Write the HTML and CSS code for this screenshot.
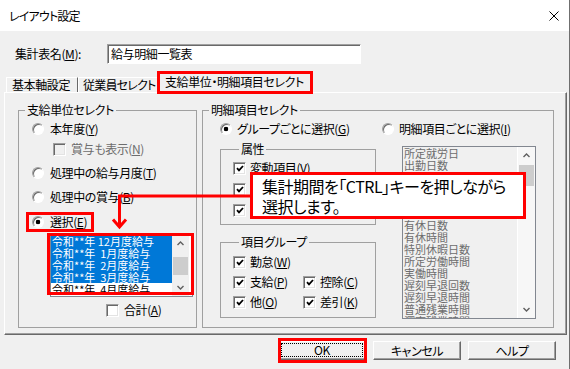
FILE: index.html
```html
<!DOCTYPE html>
<html lang="ja">
<head>
    <meta charset="UTF-8">
    <title>レイアウト設定</title>
    <link rel="stylesheet" href="styles.css">
</head>
<body>
<div class="window">
    <div class="titlebar">
        <span class="title">レイアウト設定</span>
        <svg class="close" width="10" height="10" viewBox="0 0 10 10"><path d="M0.5 0.5L9.5 9.5M9.5 0.5L0.5 9.5" stroke="#000" stroke-width="1" fill="none"/></svg>
    </div>

    <div class="name-row">
        <span class="name-label">集計表名(<u>M</u>):</span>
        <div class="textbox">給与明細一覧表</div>
    </div>

    <div class="tabs">
        <div class="tab tab-base">基本軸設定</div>
        <div class="tab tab-staff">従業員セレクト</div>
        <div class="tab tab-unit active">支給単位・明細項目セレクト</div>
    </div>

    <div class="panel">
        <!-- 支給単位 -->
        <fieldset class="group unit-group">
            <legend>支給単位セレクト</legend>
            <div class="unit-body">
                <div class="opt first"><span class="radio"></span><span>本年度(<u>Y</u>)</span></div>
                <div class="opt sub disabled"><span class="check off"></span><span>賞与も表示(<u>N</u>)</span></div>
                <div class="opt"><span class="radio"></span><span>処理中の給与月度(<u>T</u>)</span></div>
                <div class="opt"><span class="radio"></span><span>処理中の賞与(<u>B</u>)</span></div>
                <div class="opt pick"><span class="mark"><span class="radio on"></span><span>選択(<u>E</u>)</span></span></div>
                <div class="list month-list">
                    <div class="list-items">
                        <div class="list-item sel">令和**年 12月度給与</div>
                        <div class="list-item sel">令和**年  1月度給与</div>
                        <div class="list-item sel">令和**年  2月度給与</div>
                        <div class="list-item sel">令和**年  3月度給与</div>
                        <div class="list-item">令和**年  4月度給与</div>
                    </div>
                    <div class="scrollbar">
                        <div class="sb-btn"><svg width="7" height="5" viewBox="0 0 7 5"><path d="M0.5 4L3.5 1L6.5 4" stroke="#606060" stroke-width="1.4" fill="none"/></svg></div>
                        <div class="sb-track"><div class="sb-thumb"></div></div>
                        <div class="sb-btn"><svg width="7" height="5" viewBox="0 0 7 5"><path d="M0.5 1L3.5 4L6.5 1" stroke="#606060" stroke-width="1.4" fill="none"/></svg></div>
                    </div>
                </div>
                <div class="opt total"><span class="check off"></span><span>合計(<u>A</u>)</span></div>
            </div>
        </fieldset>

        <!-- 明細項目 -->
        <fieldset class="group item-group">
            <legend>明細項目セレクト</legend>
            <div class="item-body">
                <div class="mode-row">
                    <div class="opt mode"><span class="radio on"></span><span>グループごとに選択(<u>G</u>)</span></div>
                    <div class="opt"><span class="radio"></span><span>明細項目ごとに選択(<u>I</u>)</span></div>
                </div>
                <div class="item-cols">
                    <div class="sub-groups">
                        <fieldset class="group attr-group">
                            <legend>属性</legend>
                            <div class="opt first"><span class="check"><svg width="8" height="7" viewBox="0 0 8 7"><path d="M1 3.2L3 5.4L7 1" stroke="#000" stroke-width="1.8" fill="none"/></svg></span><span>変動項目(<u>V</u>)</span></div>
                            <div class="opt"><span class="check"><svg width="8" height="7" viewBox="0 0 8 7"><path d="M1 3.2L3 5.4L7 1" stroke="#000" stroke-width="1.8" fill="none"/></svg></span><span>固定項目(<u>F</u>)</span></div>
                            <div class="opt"><span class="check"><svg width="8" height="7" viewBox="0 0 8 7"><path d="M1 3.2L3 5.4L7 1" stroke="#000" stroke-width="1.8" fill="none"/></svg></span><span>計算項目(<u>R</u>)</span></div>
                        </fieldset>
                        <fieldset class="group kind-group">
                            <legend>項目グループ</legend>
                            <div class="kind-grid">
                                <div class="opt"><span class="check"><svg width="8" height="7" viewBox="0 0 8 7"><path d="M1 3.2L3 5.4L7 1" stroke="#000" stroke-width="1.8" fill="none"/></svg></span><span>勤怠(<u>W</u>)</span></div>
                                <div></div>
                                <div class="opt"><span class="check"><svg width="8" height="7" viewBox="0 0 8 7"><path d="M1 3.2L3 5.4L7 1" stroke="#000" stroke-width="1.8" fill="none"/></svg></span><span>支給(<u>P</u>)</span></div>
                                <div class="opt"><span class="check"><svg width="8" height="7" viewBox="0 0 8 7"><path d="M1 3.2L3 5.4L7 1" stroke="#000" stroke-width="1.8" fill="none"/></svg></span><span>控除(<u>C</u>)</span></div>
                                <div class="opt"><span class="check"><svg width="8" height="7" viewBox="0 0 8 7"><path d="M1 3.2L3 5.4L7 1" stroke="#000" stroke-width="1.8" fill="none"/></svg></span><span>他(<u>O</u>)</span></div>
                                <div class="opt"><span class="check"><svg width="8" height="7" viewBox="0 0 8 7"><path d="M1 3.2L3 5.4L7 1" stroke="#000" stroke-width="1.8" fill="none"/></svg></span><span>差引(<u>K</u>)</span></div>
                            </div>
                        </fieldset>
                    </div>
                    <div class="list detail-list">
                        <div class="list-items">
                            <div class="list-item">所定就労日</div>
                            <div class="list-item">出勤日数</div>
                            <div class="list-item">欠勤日数</div>
                            <div class="list-item">出勤時間</div>
                            <div class="list-item">休日出勤日数</div>
                            <div class="list-item">代休日数</div>
                            <div class="list-item">有休日数</div>
                            <div class="list-item">有休時間</div>
                            <div class="list-item">特別休暇日数</div>
                            <div class="list-item">所定労働時間</div>
                            <div class="list-item">実働時間</div>
                            <div class="list-item">遅刻早退回数</div>
                            <div class="list-item">遅刻早退時間</div>
                            <div class="list-item">普通残業時間</div>
                            <div class="list-item">深夜残業時間</div>
                        </div>
                        <div class="scrollbar">
                            <div class="sb-btn"><svg width="7" height="5" viewBox="0 0 7 5"><path d="M0.5 4L3.5 1L6.5 4" stroke="#606060" stroke-width="1.4" fill="none"/></svg></div>
                            <div class="sb-track"><div class="sb-thumb"></div></div>
                            <div class="sb-btn"><svg width="7" height="5" viewBox="0 0 7 5"><path d="M0.5 1L3.5 4L6.5 1" stroke="#606060" stroke-width="1.4" fill="none"/></svg></div>
                        </div>
                    </div>
                </div>
            </div>
        </fieldset>
    </div>

    <div class="buttons">
        <div class="btn default"><span class="focus">OK</span></div>
        <div class="btn">キャンセル</div>
        <div class="btn">ヘルプ</div>
    </div>

    <!-- annotation -->
    <svg class="connector" width="142" height="44" viewBox="110 190 142 44">
        <polyline points="251,196 119.5,196 119.5,227" stroke="#f00" stroke-width="3" fill="none"/>
        <polyline points="113,219.5 119.5,227 126,219.5" stroke="#f00" stroke-width="3" fill="none"/>
    </svg>
    <div class="callout">集計期間を「CTRL」キーを押しながら<br>選択します。</div>
</div>
</body>
</html>
```

FILE: styles.css
```css
* {
    box-sizing: border-box;
}
html, body {
    margin: 0;
    padding: 0;
}
body {
    font-family: "Noto Sans CJK JP", "Noto Sans", sans-serif;
    font-size: 12px;
    line-height: 16px;
    color: #000;
    background: #f0f0f0;
    font-feature-settings: "palt";
    letter-spacing: -0.4px;
}
u {
    text-underline-offset: 1px;
}
.window {
    position: relative;
    width: 570px;
    height: 369px;
    background: #f0f0f0;
    border-right: 1px solid #6f6f6f;
    overflow: hidden;
}
/* title bar */
.titlebar {
    height: 31px;
    background: #fff;
    display: flex;
    align-items: center;
    justify-content: space-between;
    padding: 0 10px 0 9px;
}
.title {
    letter-spacing: -0.8px;
}
/* name */
.name-row {
    display: flex;
    align-items: center;
    height: 20px;
    margin-top: 13px;
    padding-left: 15px;
}
.name-label {
    width: 92px;
}
.textbox {
    width: 254px;
    height: 20px;
    background: #fff;
    border: 1px solid;
    border-color: #a0a0a0 #fff #fff #a0a0a0;
    box-shadow: inset 1px 1px 0 #696969;
    padding: 1px 3px;
}
/* tabs */
.tabs {
    display: flex;
    align-items: flex-end;
    height: 20px;
    margin-top: 8px;
    padding-left: 6px;
}
.tab {
    height: 15px;
    line-height: 14px;
    padding: 0 0 0 5px;
    border: 1px solid;
    border-bottom: none;
    border-color: #fff #696969 transparent #fff;
    white-space: nowrap;
    overflow: hidden;
}
.tab-base {
    width: 72px;
}
.tab-staff {
    width: 82px;
    padding-left: 4px;
    letter-spacing: -0.8px;
}
.tab-unit {
    width: 154px;
}
.tab.active {
    position: relative;
    z-index: 1;
    overflow: visible;
    height: 21px;
    line-height: 16px;
    padding: 1px 0 0 6px;
    margin: 0 0 -1px -2px;
    background: #f0f0f0;
    outline: 3px solid #f00;
    outline-offset: -2px;
}
/* panel */
.panel {
    display: flex;
    gap: 5px;
    width: 563px;
    height: 243px;
    margin-left: 4px;
    padding: 9px 0 6px 13px;
    border: 1px solid;
    border-color: #fff #696969 #696969 #fff;
    box-shadow: inset -1px -1px 0 #a0a0a0;
}
fieldset.group {
    margin: 0;
    padding: 0;
    min-width: 0;
    border: 1px solid #a0a0a0;
}
fieldset.group legend {
    margin-left: 6px;
    padding: 0 2px;
    line-height: 16px;
}
.unit-group {
    width: 179px;
}
.item-group {
    width: 352px;
}
/* options */
.opt {
    display: flex;
    align-items: center;
    gap: 6px;
    height: 16px;
    white-space: nowrap;
}
.radio {
    flex: none;
    width: 12px;
    height: 12px;
    border-radius: 50%;
    border: 1px solid;
    border-color: #a0a0a0 #fff #fff #a0a0a0;
    background: #fff;
    box-shadow: inset 1px 1px 0 #696969;
}
.radio.on {
    background: radial-gradient(circle at center, #000 0 2px, #fff 2.6px);
}
.check {
    flex: none;
    display: flex;
    align-items: center;
    justify-content: center;
    width: 13px;
    height: 13px;
    border: 1px solid;
    border-color: #a0a0a0 #fff #fff #a0a0a0;
    background: #fff;
    box-shadow: inset 1px 1px 0 #696969, inset -1px -1px 0 #e3e3e3;
}
.disabled {
    color: #6d6d6d;
}
.disabled .check {
    background: #f0f0f0;
}
/* unit group body */
.unit-body {
    padding: 0 0 0 13px;
}
.unit-body .opt {
    margin-top: 8px;
}
.unit-body .opt.first {
    margin-top: 3px;
}
.unit-body .opt.sub {
    margin-top: 4px;
    margin-left: 21px;
    gap: 5px;
}
.unit-body .opt.pick {
    margin-top: 9px;
}
.mark {
    display: flex;
    align-items: center;
    gap: 6px;
    height: 14px;
    margin-left: -3px;
    padding: 0 4px 0 3px;
    outline: 3px solid #f00;
}
.unit-body .opt.total {
    margin-top: 5px;
    margin-left: 74px;
    gap: 5px;
}
/* list boxes */
.list {
    display: flex;
    border: 1px solid #828790;
    background: #fff;
}
.list-items {
    flex: 1;
    min-width: 0;
    overflow: hidden;
}
.list-item {
    height: 12px;
    font-size: 11px;
    line-height: 12px;
    padding-left: 1px;
    white-space: pre;
    letter-spacing: 0;
}
.list-item.sel {
    background: #0078d7;
    color: #fff;
}
.scrollbar {
    flex: none;
    display: flex;
    flex-direction: column;
    width: 17px;
    background: #f0f0f0;
}
.sb-btn {
    height: 17px;
    display: flex;
    align-items: center;
    justify-content: center;
}
.sb-track {
    flex: 1;
    padding: 0 1px;
}
.sb-thumb {
    background: #cdcdcd;
}
.month-list {
    position: relative;
    width: 143px;
    height: 63px;
    margin: 4px 0 0 18px;
}
.month-list .scrollbar {
    margin-right: 3px;
}
.month-list .sb-thumb {
    height: 18px;
    margin-top: 5px;
}
.month-list::after {
    content: "";
    position: absolute;
    left: -4px;
    top: -2px;
    right: -2px;
    bottom: 1px;
    border: 3px solid #f00;
}
.detail-list {
    width: 134px;
    height: 173px;
    margin: 5px 0 0 26px;
    background: #f0f0f0;
    color: #6d6d6d;
}
.detail-list .scrollbar {
    width: 18px;
    border-left: 1px solid #fff;
    background: #f7f7f7;
}
.detail-list .sb-thumb {
    height: 21px;
    margin-top: 1px;
}
/* item group body */
.item-body {
    padding: 0 0 0 17px;
}
.mode-row {
    display: flex;
    margin-top: 3px;
}
.mode-row .opt {
    gap: 5px;
}
.opt.mode {
    width: 162px;
}
.item-cols {
    display: flex;
    margin-top: 4px;
}
.sub-groups {
    width: 156px;
}
.attr-group {
    padding: 0 0 6px 12px !important;
}
.attr-group .opt,
.kind-group .opt {
    gap: 4px;
}
.attr-group .opt {
    margin-top: 5px;
}
.attr-group .opt.first {
    margin-top: 3px;
}
.kind-group {
    margin-top: 9px !important;
    padding: 4px 0 7px 12px !important;
}
.kind-grid {
    display: grid;
    grid-template-columns: 70px 70px;
    row-gap: 4px;
}
/* buttons */
.buttons {
    display: flex;
    justify-content: flex-end;
    gap: 7px;
    margin-top: 6px;
    padding-right: 13px;
}
.btn {
    display: flex;
    align-items: center;
    justify-content: center;
    width: 88px;
    height: 19px;
    border: 1px solid;
    border-color: #fff #696969 #696969 #fff;
    box-shadow: inset -1px -1px 0 #a0a0a0;
    background: #f0f0f0;
}
.btn.default {
    position: relative;
    padding: 1px 2px 2px 2px;
}
.btn .focus {
    flex: 1;
    align-self: stretch;
    display: flex;
    align-items: center;
    justify-content: center;
    border: 1px dotted #000;
}
.btn.default::after {
    content: "";
    position: absolute;
    left: -1px;
    right: -2px;
    top: -4px;
    bottom: -4px;
    border: 3px solid #f00;
}
/* annotation */
.connector {
    position: absolute;
    left: 110px;
    top: 190px;
}
.callout {
    position: absolute;
    left: 250px;
    top: 172px;
    width: 276px;
    height: 47px;
    padding: 1px 0 0 9px;
    border: 3px solid #f00;
    background: #fff;
    font-size: 16px;
    line-height: 20px;
    letter-spacing: -0.5px;
    white-space: nowrap;
}
```
